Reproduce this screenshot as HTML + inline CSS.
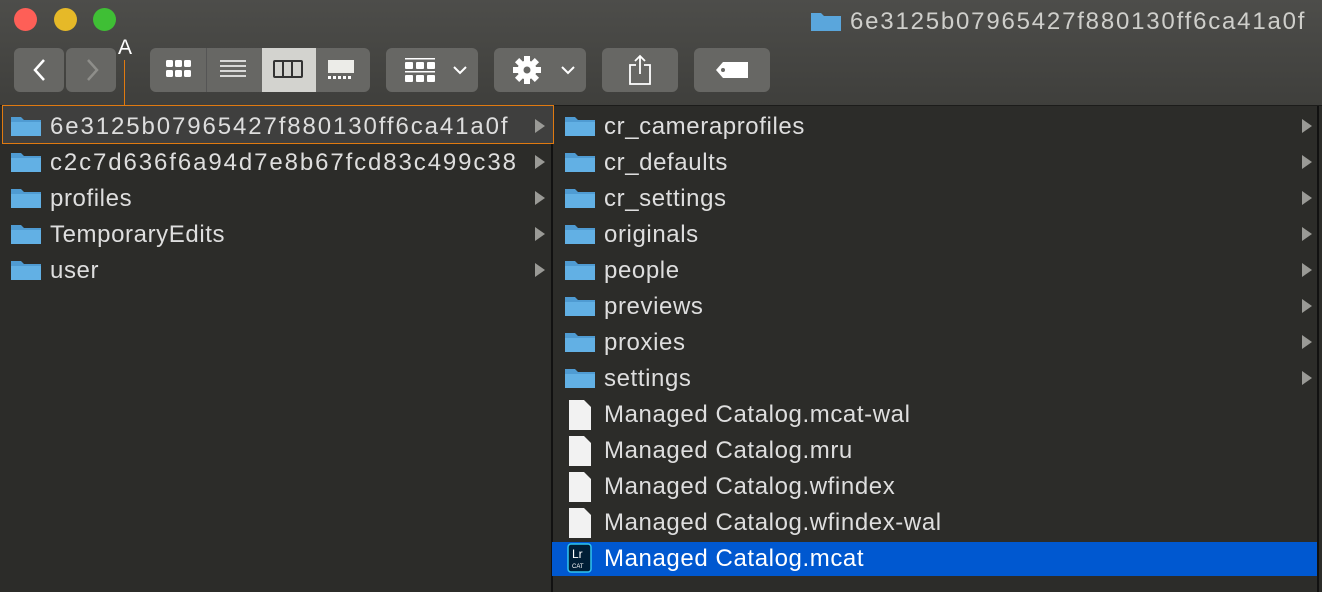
<!DOCTYPE html>
<html><head><style>
*{margin:0;padding:0;box-sizing:border-box}
body{width:1322px;height:592px;overflow:hidden;background:#2c2c29;font-family:"Liberation Sans",sans-serif;position:relative}
.top{position:absolute;left:0;top:0;width:1322px;height:106px;background:linear-gradient(#4d4d4a,#3f3f3c);border-bottom:1px solid #1c1c1a}
.dot{position:absolute;top:8px;width:23px;height:23px;border-radius:50%}
.btn{position:absolute;top:48px;height:44px;background:#676764;border-radius:6px}
.t{position:absolute;font-size:22px;color:#dcdcd8;white-space:nowrap}
.row{position:absolute;height:36px;line-height:37px;font-size:24px;letter-spacing:0.6px;color:#dedede;white-space:nowrap}
.hx{letter-spacing:1.9px}
.fold{position:absolute;width:32px;height:22px}
.arr{position:absolute;width:0;height:0;border-left:10px solid #9a9a96;border-top:7px solid transparent;border-bottom:7px solid transparent}
</style></head><body>
<div class="top">
<div class="dot" style="left:14px;background:#fe5f57"></div>
<div class="dot" style="left:54px;background:#e6b928"></div>
<div class="dot" style="left:93px;background:#3fbf35"></div>
<svg style="position:absolute;left:810px;top:10px" width="32" height="22"><path d="M1 3h10l3 3h17v15H1z" fill="#5aa6dc"/></svg>
<div class="t" style="left:850px;top:8px;font-size:24px;letter-spacing:1.8px;color:#cfcfcb">6e3125b07965427f880130ff6ca41a0f</div>
<div class="btn" style="left:14px;width:50px"></div>
<div class="btn" style="left:66px;width:50px"></div>
<svg style="position:absolute;left:30px;top:58px" width="20" height="24"><path d="M14 2 L5 12 L14 22" stroke="#fff" stroke-width="2.5" fill="none"/></svg>
<svg style="position:absolute;left:82px;top:58px" width="20" height="24"><path d="M6 2 L15 12 L6 22" stroke="#8e8e8a" stroke-width="2.5" fill="none"/></svg>
<div class="btn" style="left:150px;width:220px"></div>
<div style="position:absolute;left:206px;top:48px;width:1px;height:44px;background:#555"></div>
<div style="position:absolute;left:262px;top:48px;width:54px;height:44px;background:#d3d3cf"></div>
<svg style="position:absolute;left:164px;top:58px" width="30" height="24" fill="#fff"><rect x="2" y="2" width="7" height="7" rx="1.5"/><rect x="11" y="2" width="7" height="7" rx="1.5"/><rect x="20" y="2" width="7" height="7" rx="1.5"/><rect x="2" y="12" width="7" height="7" rx="1.5"/><rect x="11" y="12" width="7" height="7" rx="1.5"/><rect x="20" y="12" width="7" height="7" rx="1.5"/></svg>
<svg style="position:absolute;left:218px;top:58px" width="30" height="24" stroke="#fff" stroke-width="1.6"><path d="M2 3h26M2 8h26M2 13h26M2 18h26"/></svg>
<svg style="position:absolute;left:272px;top:58px" width="32" height="24" stroke="#333" stroke-width="2" fill="none"><rect x="2" y="3" width="28" height="16" rx="1"/><path d="M11 3v16M20 3v16"/></svg>
<svg style="position:absolute;left:326px;top:58px" width="32" height="24" fill="#fff"><rect x="2" y="2" width="26" height="13" fill="#ecece8"/><path d="M2 18h3v3H2zM7 18h3v3H7zM12 18h3v3h-3zM17 18h3v3h-3zM22 18h3v3h-3z"/></svg>
<div class="btn" style="left:386px;width:92px"></div>
<svg style="position:absolute;left:404px;top:56px" width="32" height="28" fill="#fff"><path d="M1 2h30v1.5H1z"/><rect x="1" y="6" width="8" height="7" rx="1"/><rect x="12" y="6" width="8" height="7" rx="1"/><rect x="23" y="6" width="8" height="7" rx="1"/><path d="M1 15h30v1.5H1z"/><rect x="1" y="19" width="8" height="7" rx="1"/><rect x="12" y="19" width="8" height="7" rx="1"/><rect x="23" y="19" width="8" height="7" rx="1"/></svg>
<svg style="position:absolute;left:452px;top:64px" width="16" height="12"><path d="M2 3l6 6 6-6" stroke="#fff" stroke-width="2" fill="none"/></svg>
<div class="btn" style="left:494px;width:92px"></div>
<svg style="position:absolute;left:512px;top:55px" width="30" height="30"><g transform="translate(15 15)" fill="#fff"><circle r="9.5"/><rect x="-3" y="-14" width="6" height="28"/><rect x="-3" y="-14" width="6" height="28" transform="rotate(45)"/><rect x="-3" y="-14" width="6" height="28" transform="rotate(90)"/><rect x="-3" y="-14" width="6" height="28" transform="rotate(135)"/><circle r="3.5" fill="#676764"/></g></svg>
<svg style="position:absolute;left:560px;top:64px" width="16" height="12"><path d="M2 3l6 6 6-6" stroke="#fff" stroke-width="2" fill="none"/></svg>
<div class="btn" style="left:602px;width:76px"></div>
<svg style="position:absolute;left:626px;top:54px" width="28" height="32" stroke="#fff" stroke-width="1.8" fill="none"><path d="M10 11H4v19h20V11h-6M14 2v18M9 7l5-5 5 5"/></svg>
<div class="btn" style="left:694px;width:76px"></div>
<svg style="position:absolute;left:714px;top:60px" width="36" height="20"><path d="M9 2h25v16H9L2 10z" fill="#fff"/><circle cx="9" cy="10" r="2" fill="#676764"/></svg>
<div class="t" style="left:118px;top:36px;font-size:21px;color:#fff">A</div>
<div style="position:absolute;left:124px;top:60px;width:1px;height:46px;background:#e07a10"></div>
</div>
<div style="position:absolute;left:551px;top:106px;width:2px;height:486px;background:#111"></div>
<div style="position:absolute;left:1317px;top:106px;width:2px;height:486px;background:#111"></div>
<div style="position:absolute;left:2px;top:105px;width:552px;height:39px;background:#3f3f3e;border:1px solid #e07a10"></div>
<div style="position:absolute;left:552px;top:542px;width:765px;height:34px;background:#0058d0"></div>
<div id="c"></div>
<script>
var L=["6e3125b07965427f880130ff6ca41a0f","c2c7d636f6a94d7e8b67fcd83c499c38","profiles","TemporaryEdits","user"];
var R=["cr_cameraprofiles","cr_defaults","cr_settings","originals","people","previews","proxies","settings"];
var F=["Managed Catalog.mcat-wal","Managed Catalog.mru","Managed Catalog.wfindex","Managed Catalog.wfindex-wal"];
var h="";
function fold(x,y){return '<svg class="fold" style="left:'+x+'px;top:'+(y+7)+'px" viewBox="0 0 32 22"><path d="M1 2h10l3 3h17v16H1z" fill="#4f9bd2"/><path d="M1 7h30v14H1z" fill="#62b0e4"/></svg>';}
L.forEach(function(n,i){var y=108+36*i;h+=fold(10,y)+'<div class="row'+(i<2?' hx':'')+'" style="left:50px;top:'+y+'px">'+n+'</div><div class="arr" style="left:535px;top:'+(y+11)+'px"></div>';});
R.forEach(function(n,i){var y=108+36*i;h+=fold(564,y)+'<div class="row" style="left:604px;top:'+y+'px">'+n+'</div><div class="arr" style="left:1302px;top:'+(y+11)+'px"></div>';});
F.forEach(function(n,i){var y=396+36*i;h+='<svg style="position:absolute;left:568px;top:'+(y+3)+'px" width="24" height="32"><path d="M1 1h15l7 7v23H1z" fill="#f2f2f2"/></svg><div class="row" style="left:604px;top:'+y+'px">'+n+'</div>';});
h+='<svg style="position:absolute;left:567px;top:543px" width="26" height="30"><rect x="1" y="1" width="23" height="28" rx="3" fill="#001e36" stroke="#31c5f0" stroke-width="1.5"/><text x="5" y="15" font-size="12" fill="#fff" font-family="Liberation Sans">Lr</text><text x="5" y="25" font-size="6" fill="#fff" font-family="Liberation Sans">CAT</text></svg><div class="row" style="left:604px;top:540px;color:#fff">Managed Catalog.mcat</div>';
document.getElementById("c").innerHTML=h;
</script>
</body></html>
